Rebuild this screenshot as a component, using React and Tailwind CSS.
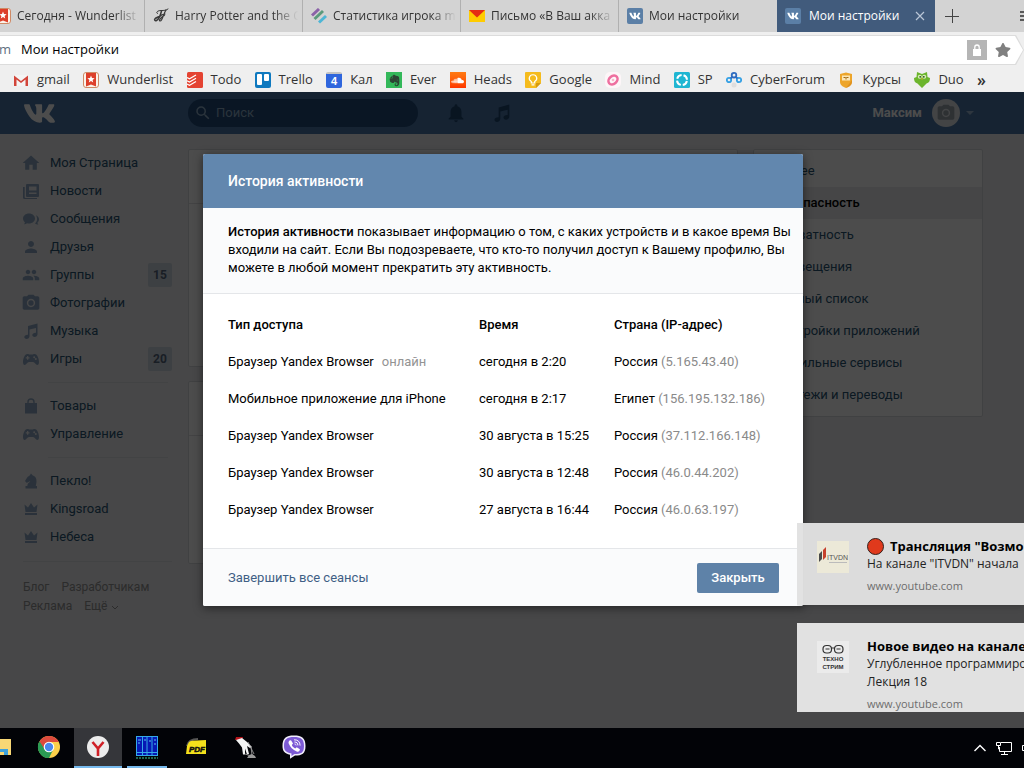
import React from "react";
import { FaVk, FaEvernote, FaSoundcloud, FaViber, FaStar } from "react-icons/fa";
import {
  MdHome,
  MdPerson,
  MdPeople,
  MdPhotoCamera,
  MdNotifications,
  MdSearch,
} from "react-icons/md";

/* ---------- browser icons ---------- */

function WunderlistIcon() {
  return (
    <svg viewBox="0 0 16 16" className="size-4 shrink-0">
      <rect x="0.5" y="0.5" width="15" height="15" rx="2.5" fill="#fbf3ea" stroke="#cf8a66" />
      <path d="M3 1h10v13.5l-5-2-5 2z" fill="#dd3f2a" />
      <path d="M8 3.6l1 2.4 2.6.2-2 1.7.6 2.5L8 9.100l-2.200 1.300.6-2.500-2-1.700L7 6z" fill="#fff" />
    </svg>
  );
}

function ScriptIcon() {
  return (
    <svg viewBox="0 0 16 16" className="size-4 shrink-0" fill="none" stroke="#3a3a3a" strokeLinecap="round">
      <path d="M4.500 5.500C2.500 5 4 2.500 8 2.500c3 0 5 0 7-1.500" strokeWidth="1" />
      <path d="M8.500 3C7.500 7 6 11.500 3.500 12.500c-1.500.6-2.500-.5-1.500-1.700C3 9.500 5.500 9 8 7.500" strokeWidth="1.500" />
      <path d="M13 2C11 5 10 9.500 8.500 12c-.8 1.400-2.300 1.300-2 0C7 10 10 8.500 11.500 7M8 7l4-1" strokeWidth="1.200" />
    </svg>
  );
}

function StatsIcon() {
  return (
    <svg viewBox="0 0 16 16" className="size-4 shrink-0" strokeWidth="3">
      <path d="M1 7.500L8 1" stroke="#8b62a8" />
      <path d="M3.500 11L12 3" stroke="#5b9a7c" />
      <path d="M8 14.500l7-6.500" stroke="#4db6d6" />
    </svg>
  );
}

function MailIcon() {
  return (
    <svg viewBox="0 0 16 16" className="size-4 shrink-0">
      <rect y="2" width="16" height="12" fill="#ffcc00" />
      <path d="M0 2h16L8 9.500z" fill="#e52e14" />
    </svg>
  );
}

function VkTile() {
  return (
    <span className="flex size-4 shrink-0 items-center justify-center rounded-xs bg-[#5b7fa6] text-white">
      <FaVk size={12} />
    </span>
  );
}

function GmailIcon() {
  return (
    <svg viewBox="0 0 16 16" className="size-4 shrink-0">
      <rect x="1" y="3" width="14" height="11" fill="#f4f4f4" />
      <path d="M1 14V3.500L8 9l7-5.500V14h-2.500V7.500L8 11 3.500 7.500V14z" fill="#d2453a" />
    </svg>
  );
}

function TodoIcon() {
  return (
    <svg viewBox="0 0 16 16" className="size-4 shrink-0" fill="none" stroke="#fff" strokeWidth="1.200">
      <rect width="16" height="16" rx="1.500" fill="#e44332" stroke="none" />
      <path d="M0 5.500l2.500 1.200L9 3M0 8.800L2.500 10 9 6.300M0 12l2.500 1.200L9 9.500" />
    </svg>
  );
}

function TrelloIcon() {
  return (
    <svg viewBox="0 0 16 16" className="size-4 shrink-0">
      <rect width="16" height="16" rx="2" fill="#0f79bf" />
      <rect x="2" y="2" width="5" height="11" rx="1" fill="#fff" />
      <rect x="9" y="2" width="5" height="7" rx="1" fill="#fff" />
    </svg>
  );
}

function CalendarIcon() {
  return (
    <span className="flex size-4 shrink-0 items-center justify-center rounded-xs border-t-2 border-[#c4c4c4] bg-[#2f66dd] font-['Liberation_Sans',sans-serif] text-[11px] leading-none font-bold text-white">
      4
    </span>
  );
}

function EverIcon() {
  return (
    <span className="flex size-4 shrink-0 items-center justify-center bg-[#33b85a] text-[#2c4434]">
      <FaEvernote size={13} />
    </span>
  );
}

function SoundIcon() {
  return (
    <span className="flex size-4 shrink-0 items-center justify-center bg-linear-to-b from-[#ff7a12] to-[#ff3600] text-white">
      <FaSoundcloud size={13} />
    </span>
  );
}

function KeepIcon() {
  return (
    <svg viewBox="0 0 16 16" className="size-4 shrink-0">
      <path d="M1 0h14a1 1 0 011 1v10l-5 5H1a1 1 0 01-1-1V1a1 1 0 011-1z" fill="#f5bb1d" />
      <path d="M11 16v-5h5z" fill="#d69a0e" />
      <path d="M6.300 9.500C4.500 8.500 4 7 4.300 5.700a3.800 3.800 0 017.400 0c.3 1.300-.2 2.800-2 3.800v1.500H6.300zM6.500 12.800h3" fill="none" stroke="#fff" strokeWidth="1.200" />
    </svg>
  );
}

function MindIcon() {
  return (
    <svg viewBox="0 0 16 16" className="size-4 shrink-0">
      <rect width="16" height="16" rx="5" fill="#fdf6f8" />
      <ellipse cx="8" cy="8" rx="5" ry="3.800" transform="rotate(-40 8 8)" fill="none" stroke="#ee6f9f" strokeWidth="2.600" />
      <circle cx="8" cy="8" r="1.300" fill="#f8b6cc" />
    </svg>
  );
}

function SpIcon() {
  return (
    <svg viewBox="0 0 16 16" className="size-4 shrink-0">
      <rect width="16" height="16" rx="1.500" fill="#1fb6d2" />
      <circle cx="8" cy="8" r="5" fill="none" stroke="#fff" strokeWidth="2" strokeDasharray="5.850 2" strokeDashoffset="-1" />
    </svg>
  );
}

function CyberIcon() {
  return (
    <svg viewBox="0 0 16 16" className="size-4 shrink-0" fill="none" strokeWidth="1.800">
      <circle cx="8" cy="3.200" r="2.300" stroke="#2f6cc0" />
      <circle cx="3" cy="8" r="2.200" stroke="#35a0e4" />
      <circle cx="13" cy="8" r="2.200" stroke="#35a0e4" />
      <circle cx="8" cy="13" r="2.500" fill="#dedede" />
      <path d="M4.500 6.500l2-1.700M11.500 6.500l-2-1.700" stroke="#2f6cc0" />
    </svg>
  );
}

function CoursesIcon() {
  return (
    <svg viewBox="0 0 16 16" className="size-4 shrink-0">
      <path d="M2 2l6-1.500L14 2v8c0 3-3 5-6 6-3-1-6-3-6-6z" fill="#eda52a" />
      <path d="M4 3.500h8v5H4z" fill="#fbe6b6" />
      <path d="M5.500 5.500h2M8.500 5.500h2M8 5v2.500" stroke="#a36a12" strokeWidth="1" />
      <path d="M14 8v2c0 3-3 5-6 6z" fill="#d98515" opacity="0.600" />
    </svg>
  );
}

function DuoIcon() {
  return (
    <svg viewBox="0 0 16 16" className="size-4 shrink-0">
      <path d="M3 0l5 2 5-2 .5 5L16 6c0 3-1 5-3.500 5.500L8 16l-4.500-4.500C1 11 0 9 0 6l2.500-1z" fill="#6cb52d" />
      <circle cx="5.800" cy="4.800" r="2" fill="#d7f0b8" />
      <circle cx="10.200" cy="4.800" r="2" fill="#d7f0b8" />
      <circle cx="6.200" cy="4.800" r="0.900" fill="#2d4a1a" />
      <circle cx="9.800" cy="4.800" r="0.900" fill="#2d4a1a" />
      <path d="M7 6.500h2L8 8z" fill="#f3a11c" />
    </svg>
  );
}

/* ---------- site icons ---------- */

function NewsIcon() {
  return (
    <svg viewBox="0 0 16 16" className="size-4" fill="currentColor">
      <path d="M4 1h11a1 1 0 011 1v11a1 1 0 01-1 1H4a1 1 0 01-1-1V2a1 1 0 011-1zm2 2.500v4h7.500v-4zm0 6V11h7.500V9.500z" fillRule="evenodd" />
      <path d="M0 4h1.700v10.300c0 .5.3.7.7.7H14v1H1.500A1.500 1.500 0 010 14.500z" />
    </svg>
  );
}

function ChatIcon() {
  return (
    <svg viewBox="0 0 16 16" className="size-4" fill="currentColor">
      <path d="M6 2.500c3.300 0 6 2.200 6 5s-2.700 5-6 5c-.7 0-1.400-.1-2-.3-.8.700-2 1.100-3 1 .6-.6.900-1.300.9-2C.7 10.300 0 9 0 7.500c0-2.800 2.700-5 6-5z" />
      <path d="M13 4.200c1.800.8 3 2.300 3 4 0 1.300-.5 2.300-1.500 3.200 0 .8.300 1.600.9 2.200-1.300 0-2.500-.5-3.300-1.200 1.200-1 2-2.700 2-4.400 0-1.400-.4-2.700-1.100-3.800z" />
    </svg>
  );
}

function NoteIcon({ className = "size-4" }) {
  return (
    <svg viewBox="0 0 16 16" className={className} fill="currentColor">
      <path d="M5 3l9.500-2.500v10.700c0 1.600-1.300 2.800-3 2.800-1.300 0-2.200-.8-2.200-1.900 0-1.400 1.500-2.400 3.700-2.300V5L6.500 6.600v6.600c0 1.600-1.300 2.800-3 2.800-1.300 0-2.200-.8-2.200-1.900C1.300 12.700 2.800 11.700 5 11.800z" />
    </svg>
  );
}

function GamepadIcon() {
  return (
    <svg viewBox="0 0 16 16" className="size-4" fill="currentColor">
      <path fillRule="evenodd" d="M4.500 3c1 0 1.500.6 2.200.6h2.600c.7 0 1.200-.6 2.200-.6C14.500 3 16 8 16 11c0 2-.6 3-1.700 3-1.500 0-2.500-3-4.300-3H6c-1.800 0-2.800 3-4.300 3C.6 14 0 13 0 11c0-3 1.500-8 4.500-8zM4 5v1.200H2.800v1.300H4v1.200h1.300V7.500h1.200V6.200H5.300V5zm7.200.2a1 1 0 100 2 1 1 0 000-2zm1.600 1.900a1 1 0 100 2 1 1 0 000-2z" />
    </svg>
  );
}

function BagIcon() {
  return (
    <svg viewBox="0 0 16 16" className="size-4">
      <path d="M2 5h12v10.500H2z" fill="currentColor" />
      <path d="M5 7V4a3 3 0 016 0v3" fill="none" stroke="currentColor" strokeWidth="1.400" />
    </svg>
  );
}

function KnightIcon() {
  return (
    <svg viewBox="0 0 16 16" className="size-4" fill="currentColor">
      <path d="M2.500 15.500V13h1.800c0-2.500 2-3.500 3-4.700-1.500 0-2.300 1.300-3.800 1.500L2 8l2.500-4 2.200-1.500L8 .5l1.500 1.700c3 .8 4 3.300 4 6 0 2-.5 3.300-.7 4.800H14v2.500z" />
    </svg>
  );
}

function CrownIcon() {
  return (
    <svg viewBox="0 0 16 16" className="size-4" fill="currentColor">
      <path d="M1.500 3.500L5 6.500 8 2l3 4.500 3.500-3-1 7.500h-11zM2 12h12v2H2z" />
    </svg>
  );
}

/* ---------- data ---------- */

const tabs = [
  { icon: <WunderlistIcon />, title: "Сегодня - Wunderlist" },
  { icon: <ScriptIcon />, title: "Harry Potter and the C" },
  { icon: <StatsIcon />, title: "Статистика игрока m" },
  { icon: <MailIcon />, title: "Письмо «В Ваш акка" },
  { icon: <VkTile />, title: "Мои настройки" },
];

const bookmarks = [
  [<GmailIcon />, "gmail"],
  [<WunderlistIcon />, "Wunderlist"],
  [<TodoIcon />, "Todo"],
  [<TrelloIcon />, "Trello"],
  [<CalendarIcon />, "Кал"],
  [<EverIcon />, "Ever"],
  [<SoundIcon />, "Heads"],
  [<KeepIcon />, "Google"],
  [<MindIcon />, "Mind"],
  [<SpIcon />, "SP"],
  [<CyberIcon />, "CyberForum"],
  [<CoursesIcon />, "Курсы"],
  [<DuoIcon />, "Duo"],
];

const menuGroups = [
  [
    [<MdHome size={20} className="shrink-0" />, "Моя Страница"],
    [<NewsIcon />, "Новости"],
    [<ChatIcon />, "Сообщения"],
    [<MdPerson size={18} className="shrink-0" />, "Друзья"],
    [<MdPeople size={18} className="shrink-0" />, "Группы", 15],
    [<MdPhotoCamera size={20} className="shrink-0" />, "Фотографии"],
    [<NoteIcon />, "Музыка"],
    [<GamepadIcon />, "Игры", 20],
  ],
  [
    [<BagIcon />, "Товары"],
    [<GamepadIcon />, "Управление"],
  ],
  [
    [<KnightIcon />, "Пекло!"],
    [<CrownIcon />, "Kingsroad"],
    [<CrownIcon />, "Небеса"],
  ],
];

const settings = [
  "Общее",
  "Безопасность",
  "Приватность",
  "Оповещения",
  "Чёрный список",
  "Настройки приложений",
  "Мобильные сервисы",
  "Платежи и переводы",
];

const sessions = [
  ["Браузер Yandex Browser", "сегодня в 2:20", "Россия", "(5.165.43.40)", true],
  ["Мобильное приложение для iPhone", "сегодня в 2:17", "Египет", "(156.195.132.186)"],
  ["Браузер Yandex Browser", "30 августа в 15:25", "Россия", "(37.112.166.148)"],
  ["Браузер Yandex Browser", "30 августа в 12:48", "Россия", "(46.0.44.202)"],
  ["Браузер Yandex Browser", "27 августа в 16:44", "Россия", "(46.0.63.197)"],
];

/* ---------- browser ---------- */

function BrowserChrome() {
  return (
    <header className="bg-[#efefef] font-['Open_Sans','Noto_Sans',sans-serif] text-[13px] text-[#333]">
      <div className="flex h-8 bg-[#d3d3d3] text-xs">
        <div role="tablist" className="-ml-[13px] flex shrink-0">
          {tabs.map((t, i) => (
            <button
              key={i}
              role="tab"
              aria-selected="false"
              className={
                "flex w-[158px] items-center gap-1.5 border-r pr-1 pl-2 text-left " +
                (i === 4 ? "border-transparent" : "border-[#b0b0b0]")
              }
            >
              {t.icon}
              <span className="min-w-0 flex-1 overflow-hidden mask-r-from-80% whitespace-nowrap">
                {t.title}
              </span>
            </button>
          ))}
          <div className="flex w-[158px] items-center bg-[#415b7c] px-2 text-white">
            <button role="tab" aria-selected="true" className="flex flex-1 items-center gap-2">
              <VkTile />
              <span className="font-medium whitespace-nowrap">Мои настройки</span>
            </button>
            <button aria-label="Закрыть вкладку" className="p-0.5">
              <svg viewBox="0 0 10 10" className="size-2.5" stroke="#b9c6d6" strokeWidth="1.200">
                <path d="M1 1l8 8M9 1L1 9" />
              </svg>
            </button>
          </div>
        </div>
        <button aria-label="Новая вкладка" className="px-2.5">
          <svg viewBox="0 0 14 14" className="size-3.5" stroke="#444" strokeWidth="1">
            <path d="M7.500 0v14M0 7.500h14" />
          </svg>
        </button>
        <button aria-label="Меню" className="-mr-2.5 ml-auto">
          <svg viewBox="0 0 14 14" className="size-3.5" stroke="#333" strokeWidth="1.500">
            <path d="M0 3h14M0 7h14M0 11h14" />
          </svg>
        </button>
      </div>

      <div className="pt-[3px]">
        <div className="bg-[#dcdcdc] py-px pr-px [clip-path:polygon(0_0,calc(100%-8px)_0,100%_50%,calc(100%-8px)_100%,0_100%)]">
          <div className="flex h-7 items-center bg-white pr-3 [clip-path:polygon(0_0,calc(100%-8px)_0,100%_50%,calc(100%-8px)_100%,0_100%)]">
            <span className="-ml-px w-[22px] text-[#5f6f80]">m</span>
            <input
              aria-label="Адрес"
              defaultValue="Мои настройки"
              className="min-w-0 flex-1 bg-transparent text-black outline-none"
            />
            <button aria-label="Защищено" className="mr-2 flex size-5 items-center justify-center bg-[#b5b5b5]">
              <svg viewBox="0 0 10 12" className="h-3 w-2.5">
                <path d="M1 5h8v7H1z" fill="#fff" />
                <path d="M2.800 6V3.200a2.200 2.200 0 014.400 0V6" fill="none" stroke="#fff" strokeWidth="1.300" />
              </svg>
            </button>
            <button aria-label="В закладки" className="text-[#808080]">
              <FaStar size={16} />
            </button>
          </div>
        </div>
      </div>

      <nav aria-label="Закладки" className="flex h-[27px] items-center justify-between overflow-hidden pt-1 pr-[38px] pb-px pl-[13px]">
        {bookmarks.map(([icon, name]) => (
          <a key={name} href="#" className="flex items-center gap-2">
            {icon}
            <span>{name}</span>
          </a>
        ))}
        <button aria-label="Ещё закладки" className="text-base leading-none font-semibold">»</button>
      </nav>
    </header>
  );
}

/* ---------- site ---------- */

function SiteHeader() {
  return (
    <div className="bg-[#4a76a8]">
      <div className="flex h-[42px] w-full max-w-[983px] items-center pl-[23px]">
        <a href="#" aria-label="ВКонтакте" className="w-[165px] text-white">
          <FaVk size={33} />
        </a>
        <label className="flex h-7 w-[230px] items-center gap-1 rounded-full bg-[#224b7a] pl-1.5 text-[#8fadc8]">
          <MdSearch size={18} />
          <input
            aria-label="Поиск"
            placeholder="Поиск"
            className="min-w-0 flex-1 bg-transparent outline-none placeholder:text-[#8fadc8]"
          />
        </label>
        <button aria-label="Уведомления" className="ml-[27px] text-[#1e4671]">
          <MdNotifications size={22} />
        </button>
        <button aria-label="Музыка" className="ml-[26px] text-[#1e4671]">
          <NoteIcon className="size-[18px]" />
        </button>
        <button className="ml-auto flex items-center gap-2.5 pr-[9px] font-bold text-white">
          Максим
          <span className="flex size-7 items-center justify-center rounded-full bg-[#dfe3e8] text-[#9aa3ac]">
            <MdPhotoCamera size={20} />
          </span>
          <span className="-ml-1 border-x-4 border-t-4 border-x-transparent border-t-[#9bb6d2]" />
        </button>
      </div>
    </div>
  );
}

function SideMenu() {
  return (
    <nav aria-label="Меню сайта" className="w-[149px] shrink-0">
      {menuGroups.map((group, g) => (
        <div key={g}>
          {g > 0 && <hr className="mt-[9px] mr-1 mb-[9px] ml-[25px] border-[#dcdfe4]" />}
          <ul>
            {group.map(([icon, name, count]) => (
              <li key={name}>
                <a href="#" className="flex h-7 items-center text-[#285473]">
                  <span className="flex w-[27px] items-center text-[#8da6c2]">
                    <span className="flex w-4 justify-center">{icon}</span>
                  </span>
                  {name}
                  {count && (
                    <span className="ml-auto flex h-6 w-6 items-center justify-center rounded-xs bg-[#cdd6e0] text-xs font-bold text-[#55677d]">
                      {count}
                    </span>
                  )}
                </a>
              </li>
            ))}
          </ul>
        </div>
      ))}
      <div className="mt-[10px] flex flex-wrap gap-x-3 border-t border-[#dcdfe4] pt-4 text-xs leading-[19px] text-[#939393]">
        <a href="#">Блог</a>
        <a href="#">Разработчикам</a>
        <a href="#">Реклама</a>
        <a href="#" className="flex items-center gap-1">
          Ещё
          <svg viewBox="0 0 8 8" className="size-2" fill="none" stroke="currentColor">
            <path d="M1 3l3 3 3-3" />
          </svg>
        </a>
      </div>
    </nav>
  );
}

function Page() {
  return (
    <div className="flex w-full max-w-[983px] pl-[23px]">
      <div className="pt-[15px]">
        <SideMenu />
      </div>
      <div className="ml-4 flex flex-1 flex-col gap-3.5 pt-[15px]">
        <section className="h-[218px] rounded-xs border border-[#d8dadd] bg-white">
          <div className="h-[54px] border-b border-[#e0e2e5]" />
        </section>
        <section className="h-[183px] rounded-xs border border-[#d8dadd] bg-white">
          <div className="h-[54px] border-b border-[#e0e2e5]" />
        </section>
      </div>
      <aside className="ml-[15px] w-[230px] pt-[15px]">
        <ul className="rounded-xs border border-[#d8dadd] bg-white py-[5px]">
          {settings.map((s, i) => (
            <li key={s}>
              <a
                href="#"
                className={
                  "flex h-8 items-center pl-5 " +
                  (i === 1 ? "bg-[#e9ebee] font-medium text-black" : "text-[#285473]")
                }
              >
                {s}
              </a>
            </li>
          ))}
        </ul>
      </aside>
    </div>
  );
}

function ActivityDialog() {
  return (
    <div className="absolute inset-0 flex items-start justify-center bg-black/70 pt-[62px] pr-[18px]">
      <div
        role="dialog"
        aria-labelledby="dialog-title"
        className="w-[600px] overflow-hidden rounded-xs bg-white text-black shadow-[0_2px_10px_rgba(0,0,0,0.5)]"
      >
        <h1 id="dialog-title" className="bg-[#6287ae] px-[25px] text-sm leading-[54px] font-medium text-white">
          История активности
        </h1>
        <p className="border-b border-[#e4e6e9] bg-[#fafbfc] pt-[15px] pr-3 pb-4 pl-[25px] leading-[18px]">
          <strong className="font-medium">История активности</strong> показывает информацию о том, с
          каких устройств и в какое время Вы
          <br />
          входили на сайт. Если Вы подозреваете, что кто-то получил доступ к Вашему профилю, Вы
          <br />
          можете в любой момент прекратить эту активность.
        </p>
        <div className="px-[25px] pt-3 pb-5">
          <table className="w-full table-fixed text-left">
            <thead>
              <tr className="h-[37px]">
                <th className="w-[251px] font-medium">Тип доступа</th>
                <th className="w-[135px] font-medium">Время</th>
                <th className="font-medium">Страна (IP-адрес)</th>
              </tr>
            </thead>
            <tbody>
              {sessions.map(([device, time, country, ip, online], i) => (
                <tr key={i} className="h-[37px]">
                  <td>
                    {device}
                    {online && <span className="ml-2 text-[#939393]">онлайн</span>}
                  </td>
                  <td>{time}</td>
                  <td>
                    {country} <span className="text-[#8a8a8a]">{ip}</span>
                  </td>
                </tr>
              ))}
            </tbody>
          </table>
        </div>
        <div className="flex items-center justify-between border-t border-[#e4e6e9] bg-[#fafbfc] pt-3.5 pr-6 pb-[13px] pl-[25px]">
          <a href="#" className="text-[#3f5f85]">Завершить все сеансы</a>
          <button className="h-[30px] w-[82px] rounded-xs bg-[#5e82a8] font-medium text-white">Закрыть</button>
        </div>
      </div>
    </div>
  );
}

function Notifications() {
  return (
    <div className="absolute right-0 bottom-4 flex w-[227px] flex-col gap-[18px] overflow-hidden font-['Open_Sans','Noto_Sans',sans-serif] text-xs leading-[18px] whitespace-nowrap text-[#222]">
      <article className="flex h-[82px] gap-[18px] bg-[#e1e1e1]/97 pt-3.5 pl-5 shadow-md">
        <svg viewBox="0 0 32 32" className="mt-1 size-8 shrink-0">
          <rect width="32" height="32" fill="#ece9d8" />
          <path d="M2 13l3-3v8l-3 3z" fill="#4a4a4a" />
          <path d="M6 9l3-3v10l-3 3z" fill="#c6402c" />
          <text x="10" y="19" fontSize="7" fill="#555" fontFamily="Liberation Sans, sans-serif">ITVDN</text>
          <path d="M12 21.500h18" stroke="#bbb" />
        </svg>
        <div>
          <h2 className="flex items-center gap-1.5 text-[13px] font-bold text-black">
            <span className="size-[17px] rounded-full border border-[#33201c] bg-[#e0391c]" />
            Трансляция "Возмо
          </h2>
          <p>На канале "ITVDN" начала</p>
          <p className="mt-1 text-[11px] text-[#6d6d6d]">www.youtube.com</p>
        </div>
      </article>
      <article className="flex h-[89px] gap-[18px] bg-[#e1e1e1] pt-3.5 pl-5 shadow-md">
        <svg viewBox="0 0 32 32" className="mt-1 size-8 shrink-0">
          <rect width="32" height="32" fill="#ebebeb" />
          <g fill="none" stroke="#333" strokeWidth="1.200">
            <rect x="6" y="4.500" width="8.500" height="7.500" rx="3.500" />
            <rect x="17.500" y="4.500" width="8.500" height="7.500" rx="3.500" />
            <path d="M14.500 7h3M8.500 8h4M19.500 8h4" />
          </g>
          <g fill="#333" fontFamily="Liberation Sans, sans-serif" fontSize="6" fontWeight="bold" textAnchor="middle">
            <text x="16" y="20">ТЕХНО</text>
            <text x="16" y="28">СТРИМ</text>
          </g>
        </svg>
        <div>
          <h2 className="text-[13px] font-bold text-black">Новое видео на канале</h2>
          <p>Углубленное программиро</p>
          <p>Лекция 18</p>
          <p className="mt-1 text-[11px] text-[#6d6d6d]">www.youtube.com</p>
        </div>
      </article>
    </div>
  );
}

/* ---------- taskbar ---------- */

function Taskbar() {
  const item = "flex h-full w-12 items-center justify-center border-b-2 border-transparent";
  return (
    <footer className="flex h-10 justify-between overflow-hidden bg-[#020307]">
      <div className="-ml-6 flex gap-px">
        <button aria-label="Проводник" className={item}>
          <svg viewBox="0 0 24 24" className="size-6">
            <path d="M0 4h23v16H0z" fill="#f8d775" />
            <path d="M4 14h16v6h-4v-3H8v3H4z" fill="#3ea2dc" />
          </svg>
        </button>
        <button aria-label="Chrome" className={item}>
          <svg viewBox="0 0 24 24" className="size-6">
            <circle cx="12" cy="12" r="11" fill="#fcd04b" />
            <path d="M12 12L2.470 6.500A11 11 0 0121.530 6.500L21.800 7H12z" fill="#dc4a3d" />
            <path d="M2.470 6.500A11 11 0 0012 23l4.300-8.500L12 12z" fill="#2a9a53" />
            <path d="M2.470 6.500L7.700 14.500 12 12V7H8z" fill="#dc4a3d" />
            <path d="M2.470 6.500L7.500 14.800A5.500 5.500 0 0013.500 17L12 23A11 11 0 012.470 6.500z" fill="#2a9a53" />
            <circle cx="12" cy="12" r="5.300" fill="#fff" />
            <circle cx="12" cy="12" r="4.200" fill="#4a88ee" />
          </svg>
        </button>
        <button aria-label="Яндекс.Браузер" className="flex h-full w-12 items-center justify-center border-b-2 border-[#76b9ed] bg-[#35363a]">
          <svg viewBox="0 0 24 24" className="size-6">
            <circle cx="12" cy="12" r="11" fill="#ececec" />
            <path d="M6.500 7L12 13.500 17.500 7M12 13v8" fill="none" stroke="#cf2027" strokeWidth="2.600" />
          </svg>
        </button>
        <button aria-label="Far Manager" className="mx-1 flex h-full w-10 items-center justify-center border-b-2 border-[#76b9ed]">
          <svg viewBox="0 0 24 24" className="size-6">
            <rect x="1" y="1" width="22" height="20" fill="#0618b4" />
            <path d="M1.500 1v20M7.500 1v20M12 1v20M17 1v20M22.500 1v20M1 1.500h22M1 17.500h22M1 20.500h22" stroke="#35a9e8" />
            <path d="M3 5h3M3 8h2M9 5h2M14 6h2M19 5h2M19 9h2" stroke="#58c6f0" />
            <path d="M1 23h22" stroke="#2c8a6a" strokeWidth="1.500" strokeDasharray="2 1" />
          </svg>
        </button>
        <button aria-label="PDF" className={item}>
          <svg viewBox="0 0 24 24" className="size-6">
            <path d="M3 11C4 6 9 4 14 4" fill="none" stroke="#555" strokeWidth="2" />
            <path d="M5 7q1-1 3-1.300L22 5v14H2l1-8z" fill="#f4e11c" />
            <text x="5" y="16.500" fontSize="8" fontWeight="bold" fontStyle="italic" fontFamily="Liberation Sans, sans-serif" fill="#111" stroke="#111" strokeWidth="0.500">PDF</text>
          </svg>
        </button>
        <button aria-label="Марионетка" className={item}>
          <svg viewBox="0 0 24 24" className="size-6">
            <path d="M2 5l1-3h7l-1 3z" fill="#b3151b" />
            <path d="M3 5l6-2 5 4 5 5-2 1-3-2 2 8-2 .5-2-6v6h-2l-1-7-3-4z" fill="#f4f4f4" />
            <path d="M15 7l6 12M18 12l1 8M12 19l6 2" stroke="#aaa" strokeWidth="0.800" />
            <path d="M14 23l2-3 3-1 3 2 1 2z" fill="#9a9a9a" />
          </svg>
        </button>
        <button aria-label="Viber" className={item}>
          <svg viewBox="0 0 24 24" className="size-6">
            <path d="M12 .5C20 .5 23.500 3 23.500 11S20 20.500 13 20.500L8 23.800v-4C2.500 18.500.5 16 .5 11 .5 3 4 .5 12 .5z" fill="#f1eefc" />
            <path d="M12 2c7 0 10 2 10 9s-3 8-9.500 8L9.500 21v-2.500C4 17.500 2 15.500 2 11c0-7 3-9 10-9z" fill="#7d5bd6" />
            <path d="M7.500 5.500l1.500-.3L11 8.500 9.800 10c.7 1.700 1.700 2.700 3.400 3.400l1.500-1.200 3.200 2-.4 1.600c-.8 1-1.800 1.200-2.800.8-4-1.700-6.500-4.300-8-8-.4-1-.1-2.300.8-3.100z" fill="#fff" />
            <path d="M12.500 4.800c3.500 0 5.500 2 5.600 5.400M12.800 7c2 .1 3 1.100 3.100 3M13 9c.6 0 .9.400 1 1" fill="none" stroke="#fff" strokeLinecap="round" />
          </svg>
        </button>
      </div>
      <div className="-mr-3.5 flex items-center gap-2.5 text-white">
        <button aria-label="Скрытые значки">
          <svg viewBox="0 0 12 12" className="size-3" fill="none" stroke="currentColor" strokeWidth="1.400">
            <path d="M0.500 9L6 3.500 11.500 9" />
          </svg>
        </button>
        <button aria-label="Сеть">
          <svg viewBox="0 0 16 16" className="size-4" fill="none" stroke="currentColor">
            <path d="M5 2.500h10.500v9H3.500V7M8.500 11.500v2.500M5 14.500h7" />
            <path d="M0.500 2.500h4v3h-4zM2.500 5.500V9h1" />
          </svg>
        </button>
        <button aria-label="Звук">
          <svg viewBox="0 0 16 16" className="size-4" fill="none" stroke="currentColor">
            <path d="M0.500 5.500h2L6 2v12l-3.500-3.500h-2z" />
          </svg>
        </button>
      </div>
    </footer>
  );
}

export default function App() {
  return (
    <div className="flex min-h-screen flex-col overflow-hidden">
      <BrowserChrome />
      <main className="relative flex-1 overflow-hidden bg-[#edeef0] font-[Roboto,'Noto_Sans',sans-serif] text-[13px]">
        <SiteHeader />
        <Page />
        <ActivityDialog />
        <Notifications />
      </main>
      <Taskbar />
    </div>
  );
}
